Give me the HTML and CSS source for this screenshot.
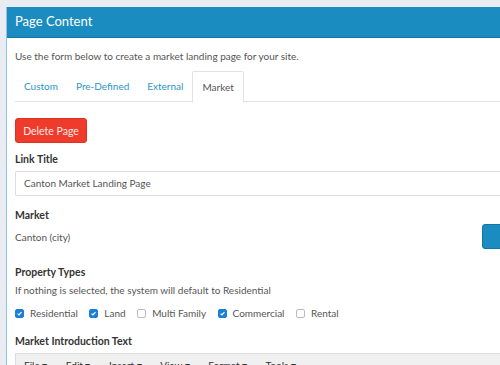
FILE: index.html
```html
<!DOCTYPE html>
<html>
<head>
<meta charset="utf-8">
<link rel="stylesheet" href="styles.css">
</head>
<body>
<div class="panel">
  <div class="panel-head">Page Content</div>
  <div class="panel-body">
    <p class="intro">Use the form below to create a market landing page for your site.</p>
    <div class="tabs">
      <span class="tab">Custom</span>
      <span class="tab">Pre-Defined</span>
      <span class="tab">External</span>
      <span class="tab active">Market</span>
    </div>
    <button class="btn-delete">Delete Page</button>
    <label class="lbl">Link Title</label>
    <div class="input">Canton Market Landing Page</div>
    <label class="lbl lbl-market">Market</label>
    <div class="market-row">
      <span class="city">Canton (city)</span>
      <span class="btn-blue"></span>
    </div>
    <label class="lbl lbl-types">Property Types</label>
    <p class="help">If nothing is selected, the system will default to Residential</p>
    <div class="checks">
      <span class="chk"><span class="box on"><svg viewBox="0 0 10 10"><path d="M2.3 5.2 L4.2 7.1 L7.8 3" fill="none" stroke="#fff" stroke-width="1.7"/></svg></span>Residential</span>
      <span class="chk"><span class="box on"><svg viewBox="0 0 10 10"><path d="M2.3 5.2 L4.2 7.1 L7.8 3" fill="none" stroke="#fff" stroke-width="1.7"/></svg></span>Land</span>
      <span class="chk"><span class="box"></span>Multi Family</span>
      <span class="chk"><span class="box on"><svg viewBox="0 0 10 10"><path d="M2.3 5.2 L4.2 7.1 L7.8 3" fill="none" stroke="#fff" stroke-width="1.7"/></svg></span>Commercial</span>
      <span class="chk"><span class="box"></span>Rental</span>
    </div>
    <label class="lbl lbl-intro">Market Introduction Text</label>
    <div class="editor">
      <span class="menu">File ▾</span>
      <span class="menu">Edit ▾</span>
      <span class="menu">Insert ▾</span>
      <span class="menu">View ▾</span>
      <span class="menu">Format ▾</span>
      <span class="menu">Tools ▾</span>
    </div>
  </div>
</div>
</body>
</html>
```
FILE: styles.css
```css
html, body {
  margin: 0;
  padding: 0;
}
body {
  background: #e9edf3;
  width: 500px;
  height: 365px;
  overflow: hidden;
  font-family: "Lato", "Open Sans", sans-serif;
  font-size: 10px;
  color: #555;
}
.panel {
  margin: 7px 0 0 6px;
  width: 560px;
  background: #fff;
  border-left: 1px solid #8fc3e0;
}
.panel-head {
  background: #1a8cc0;
  color: #fff;
  font-size: 13px;
  height: 30px;
  line-height: 29px;
  padding-left: 8px;
  border-bottom: 1px solid #1377a6;
}
.panel-body {
  padding: 0 0 0 8px;
}
.intro {
  margin: 0;
  padding-top: 11px;
  height: 22px;
  line-height: 14px;
}
.tabs {
  display: flex;
  height: 30px;
  border-bottom: 1px solid #e3e3e3;
}
.tab {
  color: #2996c8;
  padding: 0 9px;
  line-height: 31px;
  height: 30px;
}
.tab.active {
  color: #555;
  background: #fff;
  border: 1px solid #e3e3e3;
  border-bottom: 1px solid #fff;
  border-radius: 2px 2px 0 0;
  margin-bottom: -1px;
  line-height: 30px;
}
.btn-delete {
  display: block;
  margin-top: 16px;
  width: 72px;
  height: 25px;
  background: #ee3b2c;
  border: 1px solid #e0301f;
  border-radius: 3px;
  font-family: inherit;
  font-size: 10.5px;
  padding: 0;
  color: #ffe9e6;
}
.lbl {
  display: block;
  font-weight: bold;
  font-size: 10.5px;
  color: #333;
  margin-top: 9px;
  height: 14px;
  line-height: 14px;
}
.lbl-market {
  margin-top: 12px;
}
.lbl-types {
  margin-top: 16px;
}
.lbl-intro {
  margin-top: 14px;
}
.input {
  margin-top: 5px;
  height: 23px;
  line-height: 23px;
  border: 1px solid #dedede;
  border-right: none;
  border-radius: 2px 0 0 2px;
  padding-left: 8px;
}
.market-row {
  display: flex;
  align-items: center;
  margin-top: 2px;
  height: 25px;
}
.city {
  flex: 0 0 467px;
}
.btn-blue {
  width: 40px;
  height: 23px;
  background: #1a8cc0;
  border: 1px solid #1377a6;
  border-radius: 3px 0 0 3px;
}
.help {
  margin: 4px 0 0 0;
  line-height: 14px;
}
.checks {
  display: flex;
  align-items: center;
  margin-top: 9px;
  height: 14px;
}
.chk {
  display: inline-flex;
  align-items: center;
  margin-right: 11.5px;
}
.box {
  width: 7px;
  height: 7px;
  border: 1px solid #bbb;
  border-radius: 2px;
  margin-right: 6px;
  background: #fff;
}
.box.on {
  background: #1a7fd6;
  border-color: #1a7fd6;
}
.box svg {
  display: block;
  width: 7px;
  height: 7px;
}
.editor {
  margin-top: 5px;
  height: 30px;
  background: #f0f0f0;
  border: 1px solid #dcdcdc;
  border-right: none;
  padding-left: 8px;
  display: flex;
  align-items: flex-start;
}
.menu {
  line-height: 22px;
  margin-right: 18.5px;
  color: #333;
}
```
